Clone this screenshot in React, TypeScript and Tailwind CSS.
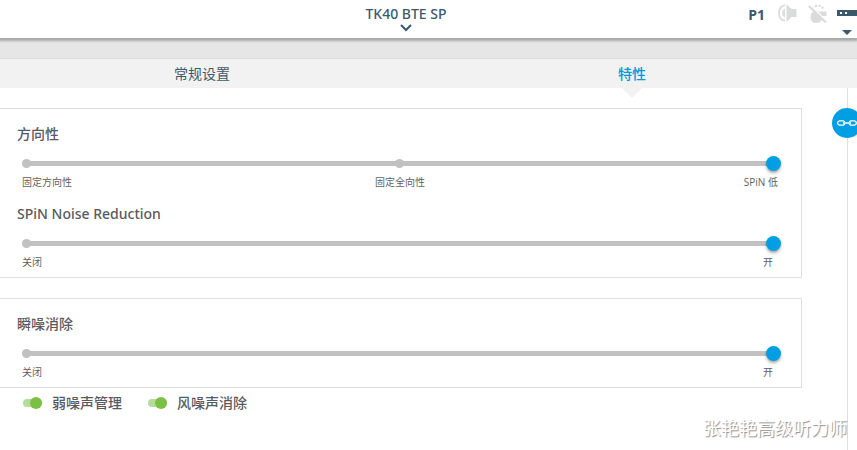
import { useId, useState } from 'react';
import clsx from 'clsx';

interface FeatureSliderProps {
    title: string;
    stops: string[];
}

const tabs = [
    { id: 'general', label: '常规设置' },
    { id: 'features', label: '特性' },
];

const toggles = ['弱噪声管理', '风噪声消除'];

function FeatureSlider({ title, stops }: FeatureSliderProps) {
    const id = useId();
    const last = stops.length - 1;
    const [value, setValue] = useState(last);

    return (
        <div>
            <label htmlFor={id} className="block h-5 pl-[17px] font-['Noto_Sans','Noto_Sans_CJK_SC',sans-serif] text-sm leading-5 font-medium text-[#5a5a5c]">
                {title}
            </label>
            <div className="relative mt-[11px] mr-5 ml-[18px] h-4">
                {/* Track with a dot on every stop */}
                <div className="absolute inset-x-2 top-1.5 flex h-[5px] items-center justify-between bg-[#c1c1c1]">
                    {stops.map(stop => (
                        <span key={stop} className="-mx-1 size-[9px] shrink-0 rounded-full bg-[#c1c1c1]" />
                    ))}
                </div>
                <input
                    id={id}
                    type="range"
                    min={0}
                    max={last}
                    value={value}
                    onChange={e => setValue(Number(e.target.value))}
                    className="relative block h-4 w-full cursor-pointer appearance-none bg-transparent [&::-webkit-slider-thumb]:size-[15px] [&::-webkit-slider-thumb]:appearance-none [&::-webkit-slider-thumb]:rounded-full [&::-webkit-slider-thumb]:bg-[#009ee2] [&::-webkit-slider-thumb]:shadow-[0_2px_3px_rgba(0,0,0,0.35)]"
                />
            </div>
            <div className="mt-[3px] mr-[23px] ml-[22px] flex h-4 text-[10px] leading-4 text-[#5f5f61]">
                {stops.map((stop, i) => (
                    <div
                        key={stop}
                        className={clsx('flex flex-1', i === last ? 'justify-end' : i > 0 && 'justify-center')}
                    >
                        <span className="min-w-5 text-center">{stop}</span>
                    </div>
                ))}
            </div>
        </div>
    );
}

function Toggle({ label }: { label: string }) {
    const [on, setOn] = useState(true);

    return (
        <label className="flex cursor-pointer items-center gap-2.5">
            <input
                type="checkbox"
                role="switch"
                checked={on}
                onChange={e => setOn(e.target.checked)}
                className="flex h-2 w-[19px] appearance-none items-center rounded-full bg-gray-300 before:size-3 before:shrink-0 before:rounded-full before:bg-gray-400 checked:justify-end checked:bg-[#b5dc9b] checked:before:bg-[#7ac143]"
            />
            {label}
        </label>
    );
}

function MuteIcon() {
    return (
        <svg viewBox="0 0 19 18" className="h-[18px] w-[19px]" fill="none">
            <path d="M7 1.200C3 2 1 5 1 9s2 7 6 7.800" stroke="#dadcdc" strokeWidth="1.800" />
            <path d="M7 4.500C5 5.500 4.300 7 4.300 9s.7 3.500 2.700 4.500z" fill="#dadcdc" />
            <path d="M8.500 0 13.500 5v8l-5 5z" fill="#dadcdc" />
            <path d="M13 5h5.500v8H13z" fill="#dadcdc" />
        </svg>
    );
}

function HandOffIcon() {
    return (
        <svg viewBox="0 0 19 19" className="size-[19px]">
            <path d="M3 9.500 8 6 10.500 7.500h8v4.500h-4.500c.6 4-1.500 7-5.500 7s-6-2-6-5.500z" fill="#dadcdc" />
            <path d="M5.800 4.600 4.600 3M8.300 3.200 7.800.800M11.300 3l.5-2.200M13.800 4.700l1.400-1.900" stroke="#dadcdc" strokeWidth="2" />
            <path d="M2 .8 19 17.300" stroke="#fff" strokeWidth="1.300" />
            <path d="M.8 2 18 18.500" stroke="#dadcdc" strokeWidth="2.200" />
        </svg>
    );
}

function ChainIcon() {
    return (
        <svg viewBox="0 0 20 6" className="h-1.5 w-5" fill="none" stroke="#fff" strokeWidth="1.300">
            <path d="M7.500 2V1.700L6.500.800H2.300L.800 2v2l1.500 1.200h4.200l1-.9V4M12.500 2v-.3l1-.9h4.200L19.200 2v2l-1.500 1.200h-4.200l-1-.9V4M6 3h8" />
        </svg>
    );
}

export default function App() {
    const [activeTab, setActiveTab] = useState('features');

    return (
        <div className="relative flex min-h-screen flex-col overflow-hidden bg-white font-['Open_Sans','Noto_Sans_CJK_SC',sans-serif]">
            <header className="relative z-10 -ml-[45px] grid h-[38px] grid-cols-[1fr_auto_1fr] bg-white shadow-[0_2px_2px_1px_#a9abab]">
                <button className="col-start-2 flex flex-col items-center pt-1 font-['Noto_Sans',sans-serif] text-sm leading-5 font-medium text-[#3c596b]">
                    TK40 BTE SP
                    <svg viewBox="0 0 12 8" className="h-2 w-3" fill="none" stroke="currentColor" strokeWidth="2">
                        <path d="m1 1 5 5 5-5" />
                    </svg>
                </button>
                <div className="flex items-start justify-end">
                    <span className="mt-[5px] mr-[13px] text-sm leading-5 font-bold text-[#3c596b]">P1</span>
                    <button aria-label="Mute" className="mt-1 mr-[11px]"><MuteIcon /></button>
                    <button aria-label="Controls off" className="mt-1 mr-2.5"><HandOffIcon /></button>
                    <button aria-label="Device" className="mt-2.5 flex flex-col items-center gap-[13px] text-[#3c596b]">
                        <svg viewBox="0 0 20 7" className="h-[7px] w-5">
                            <path d="M0 0h20v6H0z" fill="currentColor" />
                            <path d="M3 2h2v2H3zM8 2h2v2H8z" fill="#fff" />
                        </svg>
                        <svg viewBox="0 0 10 5" className="h-[5px] w-2.5">
                            <path d="M0 0h10L5 5z" fill="currentColor" />
                        </svg>
                    </button>
                </div>
            </header>

            <div className="h-[21px] border-b border-[#dcdcdc] bg-[#e6e6e6]" />

            <nav role="tablist" className="-ml-[13px] flex h-[29px] bg-[#f2f2f2] pr-2.5">
                {tabs.map(tab => (
                    <button
                        key={tab.id}
                        role="tab"
                        aria-selected={tab.id === activeTab}
                        onClick={() => setActiveTab(tab.id)}
                        className={clsx(
                            'relative flex-1 text-sm leading-5',
                            tab.id === activeTab ? 'font-medium text-[#0097d9]' : 'text-[#3c596b]'
                        )}
                    >
                        {tab.label}
                        {tab.id === activeTab && (
                            <svg viewBox="0 0 20 10" className="absolute top-full left-1/2 h-2.5 w-5 -translate-x-1/2">
                                <path d="M0 0h20L10 10z" fill="#f2f2f2" />
                            </svg>
                        )}
                    </button>
                ))}
            </nav>

            <div className="flex flex-1">
                <main className="mr-[45px] flex-1 pt-5">
                    <section className="flex flex-col gap-3.5 border-y border-r border-[#dfdfdf] pt-[15px] pb-[7px]">
                        <FeatureSlider title="方向性" stops={['固定方向性', '固定全向性', 'SPiN 低']} />
                        <FeatureSlider title="SPiN Noise Reduction" stops={['关闭', '开']} />
                    </section>
                    <section className="mt-5 border-y border-r border-[#dfdfdf] pt-[15px] pb-[7px]">
                        <FeatureSlider title="瞬噪消除" stops={['关闭', '开']} />
                    </section>
                    <div className="mt-[5px] ml-[23px] flex gap-[26px] text-sm leading-5 font-medium text-[#5a5a5c]">
                        {toggles.map(label => (
                            <Toggle key={label} label={label} />
                        ))}
                    </div>
                </main>
                <aside className="relative w-2.5 border-l border-[#dfdfdf]">
                    <button
                        aria-label="Link both sides"
                        className="absolute top-5 -left-4 flex size-[30px] items-center justify-center rounded-full bg-[#009ee2]"
                    >
                        <ChainIcon />
                    </button>
                </aside>
            </div>

            <p className="absolute right-2.5 bottom-2 text-lg leading-7 text-white [text-shadow:1px_1px_1px_#8c8c8c]">
                张艳艳高级听力师
            </p>
        </div>
    );
}
